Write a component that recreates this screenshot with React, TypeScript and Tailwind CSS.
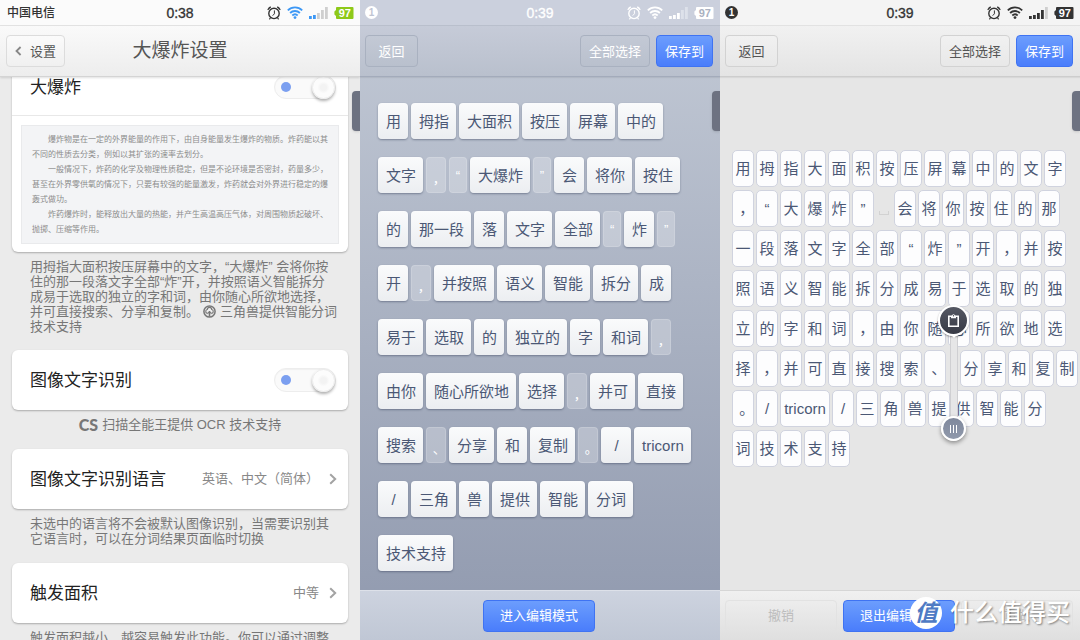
import React from "react";

type Tone = "light" | "slate" | "plain";

function Alarm() {
  return (
    <svg width="14" height="14" viewBox="0 0 14 14" fill="none" stroke="currentColor" strokeLinecap="round">
      <circle cx="7" cy="7.4" r="5.2" strokeWidth="1.4" />
      <path d="M7.400 4.800v3L5.900 9.400" strokeWidth="1" />
      <path d="M1.100 3.500A7.400 7.400 0 0 1 3.400 1.200M12.900 3.500a7.400 7.400 0 0 0-2.300-2.300" strokeWidth="1.400" />
      <path d="M3.300 12 2.700 12.900M10.700 12l.6.9" strokeWidth="1.200" />
    </svg>
  );
}

function Wifi() {
  return (
    <svg width="16" height="13" viewBox="0 0 16 13" fill="none" stroke="currentColor" strokeWidth="1.800">
      <path d="M.8 4.300a10.400 10.400 0 0 1 14.400 0" />
      <path d="M3.100 7a7 7 0 0 1 9.800 0" />
      <path d="M5.300 9.500a4 4 0 0 1 5.400 0" />
      <circle cx="8" cy="11.600" r="1.400" fill="currentColor" stroke="none" />
    </svg>
  );
}

function Signal({ bars, off }: { bars: number; off: string }) {
  return (
    <svg width="19" height="12" viewBox="0 0 19 12">
      {[0, 1, 2, 3, 4].map((i) => {
        const h = [3, 4, 6, 9, 12][i];
        return <rect key={i} x={i * 4} y={12 - h} width="2.8" height={h} fill={i < bars ? "currentColor" : off} />;
      })}
    </svg>
  );
}

function Battery({ body, text }: { body: string; text: string }) {
  return (
    <svg width="20" height="12" viewBox="0 0 20 12">
      <path d="M3 0h15.500a1 1 0 0 1 1 1v10a1 1 0 0 1-1 1H3a1 1 0 0 1-1-1V9L.4 7.600V4.400L2 3V1a1 1 0 0 1 1-1z" fill={body} />
      <text x="10.800" y="9.800" textAnchor="middle" fontSize="11" fontWeight="700" fontFamily="Liberation Sans, sans-serif" fill={text}>
        97
      </text>
    </svg>
  );
}

function StatusBar({ tone, time }: { tone: Tone; time: string }) {
  const bar = {
    light: "border-[#e4e4e4] bg-[#fbfbfb] text-[#333]",
    slate: "border-[#b9bfcc] bg-[#cbd0dd] text-white",
    plain: "border-[#e2e2e2] bg-[#f4f4f4] text-[#333]",
  }[tone];
  return (
    <div className={`relative flex h-[26px] shrink-0 items-center justify-between border-b pr-1.5 ${bar}`}>
      {tone === "light" ? (
        <span className="pl-[7px] text-xs font-medium">中国电信</span>
      ) : (
        <span
          className={`ml-[5px] flex size-[13px] items-center justify-center rounded-full text-[10px] leading-none font-bold ${
            tone === "slate" ? "bg-white text-[#bfc5d3]" : "bg-[#333] text-white"
          }`}
        >
          1
        </span>
      )}
      <time className="absolute inset-x-0 text-center text-sm [-webkit-text-stroke:0.3px]">{time}</time>
      <div className="flex items-center gap-1.5">
        <Alarm />
        <span className={tone === "light" ? "text-[#3d98f5]" : ""}>
          <Wifi />
        </span>
        <span className={tone === "light" ? "text-[#3d98f5]" : ""}>
          <Signal bars={tone === "light" ? 2 : tone === "slate" ? 3 : 4} off={tone === "slate" ? "#dde1ea" : "#cfcfcf"} />
        </span>
        <Battery
          body={tone === "light" ? "#8ec919" : tone === "slate" ? "#ffffff" : "#333333"}
          text={tone === "slate" ? "#aab1c1" : "#ffffff"}
        />
      </div>
    </div>
  );
}

function BarButton({ tone, children, className = "" }: { tone: Tone | "blue"; children: React.ReactNode; className?: string }) {
  const look = {
    light: "border-[#dcdcdc] bg-linear-to-b from-[#fbfbfb] to-[#f0f0f0] text-[#555]",
    plain: "border-[#d2d2d2] bg-linear-to-b from-[#f1f1f1] to-[#e8e8e8] text-[#555]",
    slate: "border-[#a9b1c0] bg-linear-to-b from-[#c3c9d5] to-[#b9c0cd] text-white",
    blue: "border-[#3f73f2] bg-linear-to-b from-[#6c9dfd] to-[#4a7dfb] text-white",
  }[tone];
  return (
    <button type="button" className={`flex h-8 items-center justify-center rounded border px-2 text-[13px] leading-none whitespace-nowrap ${look} ${className}`}>
      {children}
    </button>
  );
}

function EdgeTab() {
  return <div className="absolute top-[91px] right-0 z-10 h-10 w-2 rounded-l bg-[#6d7281] shadow-sm" />;
}

function Chevron() {
  return (
    <svg width="8" height="12" viewBox="0 0 8 12" fill="none" stroke="#a3a3a3" strokeWidth="2">
      <path d="m1.200 1.200 5 4.800-5 4.800" />
    </svg>
  );
}

function Toggle({ id }: { id: string }) {
  return (
    <input
      id={id}
      type="checkbox"
      defaultChecked
      className="relative h-6 w-[62px] appearance-none rounded-full border border-[#ededed] bg-[#fafafa] shadow-[inset_0_1px_1px_rgba(0,0,0,0.04)] before:absolute before:top-[6px] before:left-[6px] before:size-[10px] before:rounded-full before:bg-[#7b9ff0] after:absolute after:top-0 after:right-0 after:size-[23px] after:rounded-full after:border after:border-[#ececec] after:bg-radial after:from-[#f3f3f3] after:from-20% after:to-[#fcfcfc] after:to-40% after:shadow-[0_2px_3px_rgba(0,0,0,0.3)]"
    />
  );
}

const card = "mx-3 rounded-md bg-white shadow-[0_1px_2px_rgba(0,0,0,0.28)]";

function SwitchRow({ id, label, height = "h-[60px]" }: { id: string; label: string; height?: string }) {
  return (
    <div className={`flex items-center justify-between pr-3 pl-[18px] ${height}`}>
      <label htmlFor={id} className="text-[17px] leading-none text-[#222]">
        {label}
      </label>
      <Toggle id={id} />
    </div>
  );
}

function LinkRow({ label, value }: { label: string; value: string }) {
  return (
    <a href="#" className={`${card} flex h-[60px] items-center pr-[11px] pl-[18px]`}>
      <span className="flex-1 text-[17px] leading-none text-[#222]">{label}</span>
      <span className="pr-2.5 text-[13px] text-[#888]">{value}</span>
      <Chevron />
    </a>
  );
}

function Note({ lines, className = "" }: { lines: React.ReactNode[]; className?: string }) {
  return (
    <p className={`pl-[30px] text-[13px] leading-[15px] whitespace-nowrap text-[#777] ${className}`}>
      {lines.map((l, i) => (
        <span key={i} className="block">
          {l}
        </span>
      ))}
    </p>
  );
}

function TricornMark() {
  return (
    <svg width="13" height="13" viewBox="0 0 13 13" className="mx-1 inline-block align-[-2px]">
      <circle cx="6.500" cy="6.500" r="5.600" fill="#e4e4e4" stroke="#777" strokeWidth="1.500" />
      <path
        d="M6.500 2.400c1.400 0 2.200.9 2.200 2.100 1.200.3 1.700 1.200 1.500 2.300-.2 1-1.200 1.600-2.300 1.300L6.500 6.700 5.100 8.100c-1.100.3-2.100-.3-2.300-1.300-.2-1.100.3-2 1.500-2.300 0-1.200.8-2.100 2.200-2.100z"
        fill="#f0f0f0"
        stroke="#777"
        strokeWidth="1.100"
      />
      <path d="M6.500 6v5.600" stroke="#777" strokeWidth="1.500" />
    </svg>
  );
}

const sample = [
  "\u3000\u3000爆炸物是在一定的外界能量的作用下，由自身能量发生爆炸的物质。炸药能以其",
  "不同的性质去分类，例如以其扩张的速率去划分。",
  "\u3000\u3000一般情况下，炸药的化学及物理性质稳定，但是不论环境是否密封，药量多少，",
  "甚至在外界零供氧的情况下，只要有较强的能量激发，炸药就会对外界进行稳定的爆",
  "轰式做功。",
  "\u3000\u3000炸药爆炸时，能释放出大量的热能，并产生高温高压气体，对周围物质起破坏、",
  "抛掷、压缩等作用。",
];

function SettingsPanel() {
  return (
    <section className="relative flex min-h-0 flex-col overflow-hidden bg-[#ebebeb]">
      <StatusBar tone="light" time="0:38" />
      <header className="relative z-10 grid h-[51px] shrink-0 grid-cols-3 items-center border-b border-[#d4d4d4] bg-linear-to-b from-[#fafafa] to-[#ededed] px-1.5 shadow-[0_1px_2px_rgba(0,0,0,0.12)]">
        <BarButton tone="light" className="gap-2 justify-self-start">
          <svg width="7" height="10" viewBox="0 0 7 10" fill="none" stroke="#888" strokeWidth="1.800">
            <path d="M5.600 1 1.500 5l4.100 4" />
          </svg>
          设置
        </BarButton>
        <h1 className="text-center text-[19px] whitespace-nowrap text-[#555]">大爆炸设置</h1>
      </header>
      <EdgeTab />
      <main className="min-h-0 flex-1 overflow-hidden">
        <div className={`${card} -mt-[18px] pb-2`}>
          <SwitchRow id="bigbang" label="大爆炸" height="h-14" />
          <div className="border-t border-[#e8e8e8] px-[9px] pt-[9px]">
            <div className="border border-[#e9eaec] bg-[#f3f4f6] px-2.5 py-[6px] text-[8px] leading-[15px] whitespace-nowrap text-[#8c8c8c]">
              {sample.map((l) => (
                <p key={l}>{l}</p>
              ))}
            </div>
          </div>
        </div>
        <Note
          className="pt-[7px] pb-4"
          lines={[
            "用拇指大面积按压屏幕中的文字，“大爆炸” 会将你按",
            "住的那一段落文字全部“炸”开，并按照语义智能拆分",
            "成易于选取的独立的字和词，由你随心所欲地选择，",
            <>
              并可直接搜索、分享和复制。
              <TricornMark />
              三角兽提供智能分词
            </>,
            "技术支持",
          ]}
        />
        <div className={card}>
          <SwitchRow id="ocr" label="图像文字识别" />
        </div>
        <p className="flex h-[39px] items-center justify-center gap-1 pb-2.5 text-[13px] text-[#777]">
          <b className="font-['Lato'] text-base font-black">CS</b>
          扫描全能王提供 OCR 技术支持
        </p>
        <LinkRow label="图像文字识别语言" value="英语、中文（简体）" />
        <Note
          className="pt-[7px] pb-[17px]"
          lines={["未选中的语言将不会被默认图像识别，当需要识别其", "它语言时，可以在分词结果页面临时切换"]}
        />
        <LinkRow label="触发面积" value="中等" />
        <Note className="pt-[7px]" lines={["触发面积越小，越容易触发此功能。你可以通过调整"]} />
      </main>
    </section>
  );
}

const words =
  "用 拇指 大面积 按压 屏幕 中的 文字 ， “ 大爆炸 ” 会 将你 按住 的 那一段 落 文字 全部 “ 炸 ” 开 ， 并按照 语义 智能 拆分 成 易于 选取 的 独立的 字 和词 ， 由你 随心所欲地 选择 ， 并可 直接 搜索 、 分享 和 复制 。 / tricorn / 三角 兽 提供 智能 分词 技术支持".split(
    " "
  );

function WordChip({ text }: { text: string }) {
  if ("“”，、。".includes(text)) {
    const shape = "“”".includes(text) ? "w-[18px] text-[13px]" : "w-5 pt-1.5 text-[13px]";
    return (
      <button type="button" className={`${shape} h-9 rounded border border-white/15 bg-white/25 text-center leading-none text-white [font-feature-settings:'halt']`}>
        {text}
      </button>
    );
  }
  return (
    <button
      type="button"
      className="h-9 min-w-[30px] rounded bg-linear-to-b from-[#fafbfc] to-[#eceef1] pt-px pr-[7px] pl-2 text-[15px] leading-none text-[#4b5875] shadow-[0_1px_2px_rgba(60,70,95,0.5)]"
    >
      {text}
    </button>
  );
}

function TopActions({ tone }: { tone: Tone }) {
  const look =
    tone === "slate"
      ? "border-[#a3abbb] bg-linear-to-b from-[#c6cbd8] to-[#b9c0cd]"
      : "border-[#cdcdcd] bg-linear-to-b from-[#f1f1f1] to-[#e4e4e4]";
  return (
    <header className={`flex h-[51px] shrink-0 items-center gap-1.5 border-b pr-[7px] pl-[5px] shadow-[0_1px_1px_rgba(0,0,0,0.06)] ${look}`}>
      <BarButton tone={tone} className="mr-auto min-w-[53px]">
        返回
      </BarButton>
      <BarButton tone={tone}>全部选择</BarButton>
      <BarButton tone="blue">保存到</BarButton>
    </header>
  );
}

function WordsPanel() {
  return (
    <section className="relative flex min-h-0 flex-col overflow-hidden bg-linear-to-b from-[#c3cad6] to-[#9099ae]">
      <StatusBar tone="slate" time="0:39" />
      <TopActions tone="slate" />
      <EdgeTab />
      <main className="flex min-h-0 flex-1 flex-wrap content-start gap-x-[3px] gap-y-[18px] px-[18px] pt-[26px]">
        {words.map((w, i) => (
          <WordChip key={i} text={w} />
        ))}
      </main>
      <footer className="grid h-[50px] shrink-0 grid-cols-3 items-center gap-1.5 border-t border-[#dde1e9] bg-linear-to-b from-[#cdd3df] to-[#c0c7d5] pr-[7px] pl-[5px]">
        <BarButton tone="blue" className="col-start-2">
          进入编辑模式
        </BarButton>
      </footer>
    </section>
  );
}

const letterRows: string[][] = [
  [..."用拇指大面积按压屏幕中的文字"],
  [..."，“大爆炸” 会将你按住的那"],
  [..."一段落文字全部“炸”开，并按"],
  [..."照语义智能拆分成易于选取的独"],
  [..."立的字和词，由你随心所欲地选"],
  [..."择，并可直接搜索、", "caret", ..."分享和复制"],
  ["。", "/", "tricorn", "/", ..."三角兽提供智能分"],
  [..."词技术支持"],
];

function Letter({ text }: { text: string }) {
  if (text === "caret") return <span className="w-[10px] shrink-0" />;
  if (text === " ")
    return (
      <span className="mt-3 h-2 w-4 shrink-0 self-center px-[3px]">
        <span className="block h-1 border border-t-0 border-[#d2d2d2]" />
      </span>
    );
  return (
    <button
      type="button"
      className={`flex h-[37px] shrink-0 items-center justify-center rounded-[5px] border border-[#d0d3df] bg-[#fdfdfe] text-[15px] leading-none text-[#4b5875] [font-feature-settings:'halt'] ${
        text.length > 1 ? "w-[50px]" : "w-[22px]"
      }`}
    >
      {text}
    </button>
  );
}

function CaretHandle() {
  return (
    <div className="absolute top-[228px] left-[218px] flex w-[31px] flex-col items-center">
      <div className="relative z-10 flex size-[31px] items-center justify-center rounded-full border-2 border-white bg-linear-to-b from-[#555863] to-[#373a45] shadow-[0_1px_2px_rgba(0,0,0,0.4)]">
        <svg width="13" height="15" viewBox="0 0 13 15">
          <path d="M1.800 3.300h9.400v9.900H1.800z" fill="none" stroke="#fff" strokeWidth="1.600" />
          <path d="M4 5.200V3.400L5.300 2a1.300 1.300 0 0 1 2.400 0L9 3.400v1.800z" fill="#fff" />
          <circle cx="6.500" cy="2.700" r=".7" fill="#444752" />
        </svg>
        <svg width="8" height="4" viewBox="0 0 8 4" className="absolute top-full left-1/2 -translate-x-1/2">
          <path d="M0 0h8L4 4z" fill="#fff" />
        </svg>
      </div>
      <div className="-my-px h-[82px] w-2 border-x border-[#cfcfd2] bg-[#e6e6e7]" />
      <div className="flex size-[25px] items-center justify-center gap-0.5 rounded-full border-2 border-white bg-linear-to-b from-[#7f889c] to-[#9099ab] shadow-[0_2px_4px_rgba(0,0,0,0.4)]">
        <i className="h-2 w-px bg-white" />
        <i className="h-2 w-px bg-white" />
        <i className="h-2 w-px bg-white" />
      </div>
    </div>
  );
}

function LettersPanel() {
  return (
    <section className="relative flex min-h-0 flex-col overflow-hidden bg-[#e6e6e6]">
      <StatusBar tone="plain" time="0:39" />
      <TopActions tone="plain" />
      <EdgeTab />
      <main className="relative flex min-h-0 flex-1 flex-col gap-[3px] pt-[73px] pl-3">
        {letterRows.map((row, r) => (
          <div key={r} className="flex gap-0.5">
            {row.map((t, i) => (
              <Letter key={i} text={t} />
            ))}
          </div>
        ))}
        <CaretHandle />
      </main>
      <footer className="grid h-[50px] shrink-0 grid-cols-3 items-center gap-1.5 border-t border-[#d6d6d6] bg-linear-to-b from-[#f0f0f0] to-[#dfdfdf] pr-[7px] pl-[5px]">
        <button type="button" className="h-8 rounded border border-[#e2e2e2] text-[13px] text-[#bdbdbd]">
          撤销
        </button>
        <BarButton tone="blue">退出编辑模式</BarButton>
        <button type="button" className="h-8 rounded border border-[#e2e2e2] text-[13px] text-[#bdbdbd]">
          重做
        </button>
      </footer>
      <div className="absolute right-2.5 bottom-[11px] flex items-center gap-2">
        <span className="flex size-8 items-center justify-center rounded-full bg-white text-[23px] leading-none font-bold text-[#4f7bc4] italic">值</span>
        <span className="text-2xl leading-none font-medium text-white [text-shadow:1px_1px_2px_rgba(0,0,0,0.45)]">什么值得买</span>
      </div>
    </section>
  );
}

export default function App() {
  return (
    <div className="grid h-screen grid-cols-3 overflow-hidden font-['Liberation_Sans','Noto_Sans_CJK_SC',sans-serif]">
      <SettingsPanel />
      <WordsPanel />
      <LettersPanel />
    </div>
  );
}
